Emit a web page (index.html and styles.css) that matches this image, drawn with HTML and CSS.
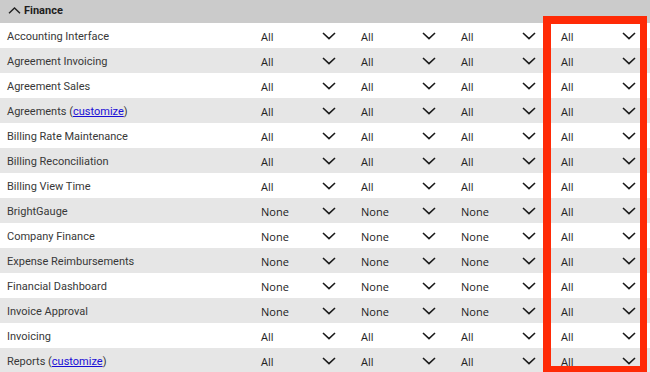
FILE: index.html
```html
<!DOCTYPE html>
<html>
<head>
<meta charset="utf-8">
<link rel="stylesheet" href="styles.css">
</head>
<body>
<div class="panel">
  <div class="section-head">
    <svg class="up" width="13" height="7" viewBox="0 0 13 7"><path d="M1 6.3 L6.5 1 L12 6.3" fill="none" stroke="#222" stroke-width="1.4"/></svg>
    <span>Finance</span>
  </div>
  <div class="rows" id="rows"></div>
  <div class="highlight"></div>
</div>
<script>
var data = [
  ["Accounting Interface", 0, ["All","All","All","All"]],
  ["Agreement Invoicing", 0, ["All","All","All","All"]],
  ["Agreement Sales", 0, ["All","All","All","All"]],
  ["Agreements", 1, ["All","All","All","All"]],
  ["Billing Rate Maintenance", 0, ["All","All","All","All"]],
  ["Billing Reconciliation", 0, ["All","All","All","All"]],
  ["Billing View Time", 0, ["All","All","All","All"]],
  ["BrightGauge", 0, ["None","None","None","All"]],
  ["Company Finance", 0, ["None","None","None","All"]],
  ["Expense Reimbursements", 0, ["None","None","None","All"]],
  ["Financial Dashboard", 0, ["None","None","None","All"]],
  ["Invoice Approval", 0, ["None","None","None","All"]],
  ["Invoicing", 0, ["All","All","All","All"]],
  ["Reports", 1, ["All","All","All","All"]]
];
var chev = '<svg class="chev" width="14" height="8" viewBox="0 0 14 8"><path d="M1 1 L7 6.6 L13 1" fill="none" stroke="#1a1a1a" stroke-width="1.6"/></svg>';
var html = "";
data.forEach(function (r) {
  html += '<div class="row"><div class="label">' + r[0] +
    (r[1] ? ' (<a href="#">customize</a>)' : '') + '</div>';
  r[2].forEach(function (v) {
    html += '<div class="sel"><span class="val">' + v + '</span>' + chev + '</div>';
  });
  html += '</div>';
});
document.getElementById("rows").innerHTML = html;
</script>
</body>
</html>
```
FILE: styles.css
```css
html, body {
  margin: 0;
  padding: 0;
  background: #ffffff;
}
.panel {
  position: relative;
  width: 650px;
  height: 372px;
  overflow: hidden;
  font-family: Roboto, "Liberation Sans", sans-serif;
}
.section-head {
  height: 23px;
  background: #cbcbcb;
  display: flex;
  align-items: center;
  padding-left: 8px;
  padding-bottom: 3px;
  box-sizing: border-box;
  font-size: 11px;
  font-weight: 700;
  color: #1e1e1e;
}
.section-head .up {
  margin-right: 3px;
  margin-top: 1px;
}
.rows {
  display: flex;
  flex-direction: column;
}
.row {
  height: 25px;
  padding-top: 2px;
  box-sizing: border-box;
  display: grid;
  grid-template-columns: 255px 100px 100px 100px 95px;
  align-items: center;
}
.row:nth-child(even) {
  background: #e6e6e6;
}
.label {
  padding-left: 7px;
  font-size: 11px;
  color: #383838;
  white-space: nowrap;
}
.label a {
  color: #1a0dd6;
  text-decoration: underline;
}
.sel {
  display: flex;
  align-items: center;
  padding-left: 6px;
  font-family: "Open Sans", "Liberation Sans", sans-serif;
  font-size: 11px;
  color: #222222;
}
.sel .val {
  width: 61px;
}
.sel .chev {
  margin-top: -1px;
}
.highlight {
  position: absolute;
  left: 543px;
  top: 16px;
  width: 104px;
  height: 356px;
  border: 8px solid #ff2a06;
  border-right-width: 7px;
  border-bottom-width: 6px;
  box-sizing: border-box;
}
```
